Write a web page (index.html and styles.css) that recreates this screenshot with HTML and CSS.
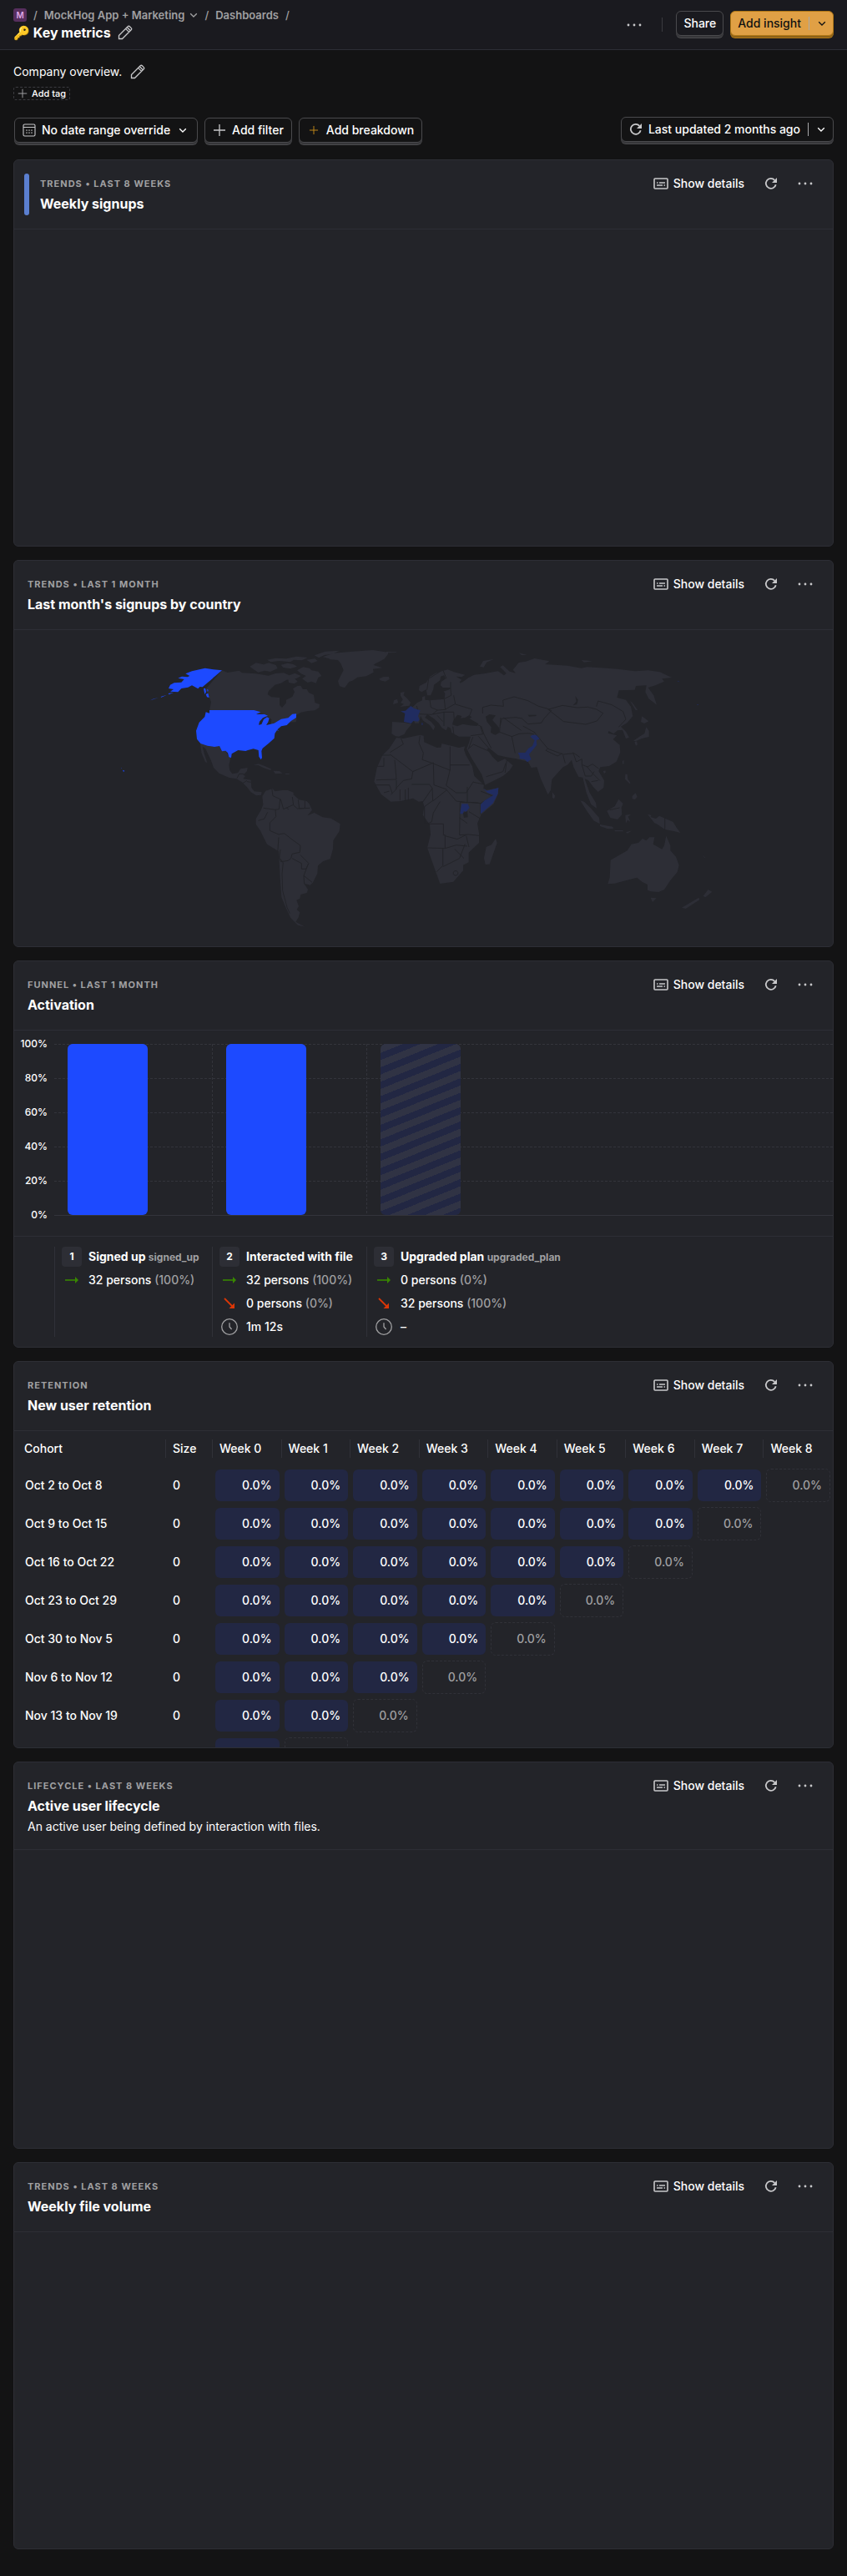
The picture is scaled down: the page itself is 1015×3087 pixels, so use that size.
FILE: index.html
```html
<!DOCTYPE html>
<html lang="en">
<head>
<meta charset="utf-8">
<meta name="viewport" content="width=device-width, initial-scale=1">
<title>Key metrics</title>
<link rel="stylesheet" href="styles.css">
</head>
<body>
<svg class="sprite" aria-hidden="true">
  <symbol id="i-pencil" viewBox="0 0 18 18"><path d="M1.5 16.5v-4L12.2 1.8a1.6 1.6 0 0 1 2.2 0l1.8 1.8a1.6 1.6 0 0 1 0 2.2L5.5 16.5zM9.6 4.4l4 4M11.4 2.8l3.9 3.9" fill="none" stroke="currentColor" stroke-width="1.3"/></symbol>
  <symbol id="i-chevron" viewBox="0 0 10 10"><path d="M1.2 3.2L5 7l3.800-3.800" fill="none" stroke="currentColor" stroke-width="1.3"/></symbol>
  <symbol id="i-plus" viewBox="0 0 16 16"><path d="M8 1v14M1 8h14" fill="none" stroke="currentColor" stroke-width="1.300"/></symbol>
  <symbol id="i-dots" viewBox="0 0 18 18"><circle cx="2" cy="9" r="1.400"/><circle cx="9" cy="9" r="1.400"/><circle cx="16" cy="9" r="1.400"/></symbol>
  <symbol id="i-refresh" viewBox="0 0 16 16"><path d="M13.700 9.200A6 6 0 1 1 12.300 3.800" fill="none" stroke="currentColor" stroke-width="1.800"/><path d="M15 1v6H9z" fill="currentColor"/></symbol>
  <symbol id="i-details" viewBox="0 0 18 14"><rect x="1" y="1" width="16" height="12" rx="1" fill="none" stroke="currentColor" stroke-width="1.600"/><path d="M4 6h1.500M7 6h7M4 9h7M12.500 9H14" stroke="currentColor" stroke-width="1.300"/></symbol>
  <symbol id="i-calendar" viewBox="0 0 16 16"><path d="M2.500 1h11A1.500 1.500 0 0 1 15 2.500v11a1.500 1.500 0 0 1-1.500 1.500h-11A1.500 1.500 0 0 1 1 13.500v-11A1.500 1.500 0 0 1 2.500 1zM1 4.500h14" fill="none" stroke="currentColor" stroke-width="1.100"/><path d="M7.300 8.200h1.400M10.300 8.200h1.400M4.300 11.200h1.400M7.300 11.200h1.400M10.300 11.200h1.400M4.300 8.200h1.400" stroke="currentColor" stroke-width="1.300"/></symbol>
  <symbol id="i-right" viewBox="0 0 20 20"><path d="M2 10h13" stroke="currentColor" stroke-width="1.600"/><path d="M14 6l4 4-4 4z" fill="currentColor"/></symbol>
  <symbol id="i-down" viewBox="0 0 20 20"><path d="M4 4l9.500 9.500" stroke="currentColor" stroke-width="1.800"/><path d="M16 9.500V16H9.500z" fill="currentColor"/></symbol>
  <symbol id="i-clock" viewBox="0 0 20 20"><circle cx="10" cy="10" r="9.300" fill="none" stroke="currentColor" stroke-width="1.300"/><path d="M10 5.200V10l2.600 3" fill="none" stroke="currentColor" stroke-width="1.300"/></symbol>
</svg>

<header class="topbar">
  <div>
    <nav class="crumbs" aria-label="Breadcrumb">
      <span class="project">M</span><span class="slash">/</span>
      <a href="#">MockHog App + Marketing <svg class="ic10"><use href="#i-chevron"/></svg></a><span class="slash">/</span>
      <a href="#">Dashboards</a><span class="slash">/</span>
    </nav>
    <div class="page-title"><h1>🔑 Key metrics</h1><button class="plain" aria-label="Edit title"><svg class="ic18"><use href="#i-pencil"/></svg></button></div>
  </div>
  <div class="actions">
    <button class="plain" aria-label="More"><svg class="ic18"><use href="#i-dots"/></svg></button>
    <span class="divider"></span>
    <button class="btn">Share</button>
    <button class="btn primary">Add insight<span class="split"></span><svg class="ic10"><use href="#i-chevron"/></svg></button>
  </div>
</header>

<main>
  <div class="description">Company overview.<button class="plain" aria-label="Edit description"><svg class="ic18"><use href="#i-pencil"/></svg></button></div>
  <button class="tag"><svg class="ic12"><use href="#i-plus"/></svg>Add tag</button>

  <div class="filters">
    <div class="filter-group">
      <button class="btn"><svg class="ic16"><use href="#i-calendar"/></svg>No date range override<svg class="ic10 trail"><use href="#i-chevron"/></svg></button>
      <button class="btn"><svg class="ic16"><use href="#i-plus"/></svg>Add filter</button>
      <button class="btn"><svg class="ic16 gold" viewBox="-3 -3 22 22"><use href="#i-plus" width="16" height="16"/></svg>Add breakdown</button>
    </div>
    <button class="btn"><svg class="ic16"><use href="#i-refresh"/></svg>Last updated 2 months ago<span class="split"></span><svg class="ic10"><use href="#i-chevron"/></svg></button>
  </div>

  <div class="cards">
    <section class="card">
      <header class="card-head"><span class="ribbon"></span>
        <div class="card-text"><p class="meta">Trends • Last 8 weeks</p><h2>Weekly signups</h2></div>
        <div class="card-tools"><button class="plain"><svg class="ic-d"><use href="#i-details"/></svg>Show details</button><button class="plain" aria-label="Refresh"><svg class="ic16"><use href="#i-refresh"/></svg></button><button class="plain" aria-label="More"><svg class="ic18"><use href="#i-dots"/></svg></button></div>
      </header>
    </section>

    <section class="card">
      <header class="card-head">
        <div class="card-text"><p class="meta">Trends • Last 1 month</p><h2>Last month's signups by country</h2></div>
        <div class="card-tools"><button class="plain"><svg class="ic-d"><use href="#i-details"/></svg>Show details</button><button class="plain" aria-label="Refresh"><svg class="ic16"><use href="#i-refresh"/></svg></button><button class="plain" aria-label="More"><svg class="ic18"><use href="#i-dots"/></svg></button></div>
      </header>
      <svg class="map" viewBox="-339 15 2943 1137" role="img" aria-label="World map of signups by country">
        <g class="land">
          <path d="M408 160l20 8 42-7 10 8 50 3 45 7 25-8 30-2 20 9 20-8 22 10-16 9-36 5-20 12-22 6-22 22-4 12 14 10 29 2 0 27 9 9 15-17 0-11 22-11 8-17-6-12 16-10 12-1 8 13 14 0 7 12 18 8 4 28 17 6-2 12-15 10-25 2-25 5-30 18 15 3-3 14-32 1-30 12-30 7 4-30-34-20-180-2-8-14 5-26-15-37-7-7z"/>
          <path d="M700 148l22 4 8 8 24 4 12 16-12 6-8 20-16-6-14 4-20-14 14-10-18-8-14-12zM508 146l22-13 28 6 18-6 26 8 6 12-26 12-20-4-24 6-16-10zM570 122l30-6 40 2 36-8 40 4-20 10-30-2-12 8-40-4-30 4zM620 140l24-6 20 4 14 8-24 8-26-4zM740 106l40-14 50-3-24 12-30 4-20 10zM712 122l30-4 10 8-22 8zM646 190l22-2 12 12-12 8-20-4z"/>
          <path d="M770 112l40-14 60-5 80-6 55 8 0 6-14 18-34 18-4 4 32 10-34 4 2 12-26 14-32 4-18 12-12 4-16 22-18-6-6-18 20-40-10-24-10-12-26-2-8-4zM973 190l14-6 18-1 6 8-16 9-18-4zM1000 93l35 1v2l-35 1z"/>
          <path d="M330 421l25 8 43 1 9 19 13-2 12 23 8 2-7 28 3 20 9 12 20-3 10-15 25-4-2 12-14 14 8 3-8 11 28 4 2 28 10 13 27 3-2 10-18 2-19-12-14-18-18-18-20-12-26-4-36-16-20-20-10-28-20-42-10-6 6 24 11 34-7-2-14-34zM520 500l20-4 22 8 24 11-4 4-24-8-20-10zM592 521l22 1 12 8-26 2zM636 531h14v3h-14z"/>
          <path d="M590 585l8 10 27-4 20 0 20 8 0 8 20 18 27 5 10 10 10 22-17 20 25-10 30 16 30 4 33 20-3 26-22 34-1 30-10 36-25 8-19 16-2 28-17 34-9 8-22-6 14 22-4 12-22 6-3 14-12 6 8 22-7 12 11 10-5 18-10 16 18 10 16 8-26-6-26-26-17-36-16-38-5-70-5-95-42-26-25-50-15-22 0-20 18-30 8-20-3-30 12-20z"/>
        </g>
        <g class="edges">
          <path d="M587 583l4 28 26 12-4 36-14 2-42-6M538 700l22-6 12-24M602 686l-2-26M619 623l10 36 36-16-4-28M682 625l4 32 20-2 0-26M665 645l14 12 45-2M640 655l8 5M602 686l-22 22 0 28 32 14 20-4 28 22 30 22-2 24-28 6-4 16-10 8-26 4-12-30 4-58M618 838l10 14-4 40 2 60 16 60 10 22M660 836l34 18 0 20 16 0 10-20-30-30M718 856l-16 42 30 24M618 804l-4 32M702 898l2 30M462 548l8-16 16 0M482 566l16-10M512 562l-14-2"/>
        </g>
        <g class="high">
          <path d="M277 172l23-9 20-5 27-6 30 5 31 3-70 60-10-1-6 7-22-12-14 7-24 4-12 13-28-2 12-8-18-3 6-13 14-7 26-2 10-11-22-4 14-6 20 2 8-4zM215 243l20-4-18 8zM190 254l20-6-22 10zM160 263l20-5-30 10zM342 226l6-2 3 14-5 8zM354 228l5 2-2 8zM350 246l8-4 4 16-8-2zM51 518l7 3-4 4zM44 510l4 2v2z"/>
          <path d="M363 303h160l24 7-16 8 30 0 12 5-18 8-12 13-3 12 10-2 8-18 12-8 8 4-4 14-7 11 29-7 12-7 13-8 25-4 15-14 14-1v14l-19 12-15 15-20 4-14 12 6 6-7-4-8 12-2 17-20 18-22 18-4 10 2 24-4 7-7-11-2-23-18-5-20 5-8 3-27-3-23 13-2 14-8-2-4-15-8-8-13 2-9-19-18 3-25-4-25-8-13-16-3-30 11-30 20-20 4-17 13 4z"/>
        </g>

        <g transform="translate(930 0)">
          <g class="land">
            <path d="M105 402l25 3 60-13 13 3 2 23 45 20 15-1 3-14 62 15 22-5-4 12 7 20 23 40 7 35 35 32-2 13 12 5 42-7-2 22-15 35-45 38-14 32 6 35v35l-37 35v35l-20 10v20l-35 40-48 7-17-47-29-82 12-48-3-35-25-35 5-30-5-20-15 2-20-12-45 10-35 2-35-27-25-45 10-50 20-45 25-25zM462 765l5 15-27 77-15 1-5-23 8-40 19-8z"/>
            <path d="M90 345l45 3 25 5-20 24-6 12-20 9-12-1-14-9zM120 240l14-3-3 12 15 14 10 12-4 12-34 4 14-10-12-4 8-12-8-14zM96 268l12-5 3 14-18 5zM45 192l14-8 20-1-4 10-18 6z"/>
            <path d="M165 290L180 276 198 268 198 256 208 252 208 266 225 268 278 263 280 242 274 236 292 230 300 226 298 222 272 222 264 214 266 202 282 190 276 178 264 182 262 196 240 212 238 228 228 250 216 250 212 228 196 238 186 232 188 216 212 204 226 182 246 170 270 162 290 157 312 166 352 176 340 184 320 182 340 194 332 202 342 218 322 214 345 200 365 186 384 176 420 172 470 163 492 178 500 170 478 148 488 142 512 164 534 170 524 158 545 132 570 128 602 117 655 127 640 138 720 143 770 152 790 148 840 151 900 155 962 163 1010 160 1052 166 1095 186 1060 190 1068 200 1036 214 1010 222 1030 250 1041 284 1012 262 1000 238 1004 214 966 216 962 230 905 232 898 258 930 266 948 290 955 325 935 348 912 362 930 380 942 402 930 405 918 374 900 376 886 388 868 378 866 386 898 394 884 408 908 428 910 455 896 488 870 504 838 508 832 522 852 556 850 582 830 597 812 578 795 555 782 550 800 600 822 636 825 656 805 642 788 600 775 545 760 543 742 508 735 482 720 500 704 508 664 552 660 590 650 607 624 550 610 508 590 510 578 488 536 478 500 472 470 465 440 440 430 442 450 470 470 490 495 478 524 502 512 520 488 540 424 572 412 535 375 475 358 442 366 420 372 398 330 398 304 384 300 368 290 362 284 376 268 366 258 350 240 334 216 318 208 330 230 345 244 362 238 376 226 358 200 340 192 324 186 350 172 350 150 300z"/>
            <path d="M945 270l8 6 20 28-8-1zM988 325l24 18-16 8-12-6zM1003 364l10 13 0 22-26 6-22 10-8-2 24-16 16-10zM961 418l8-3 3 12-6 4zM918 485l5-2-1 16-4-4zM848 523l8-3 2 6-6 5zM928 533l7 0 2 18 10 14-4 2-16-16zM953 612l12-11 6 14-8 9-10-2zM666 598l10 14-4 10-6-4zM766 628l14 4 26 26 28 32 2 22-22-12-24-34zM837 714l46 8 2 8-20 0-28-10zM862 665l28-16 14-26 16 16-6 14 2 26-16 17-26-6-6-12zM928 680l20-2-10 8 8 18-10-6-6 12zM1008 677l14 4-4 6 20 6 12-10 50 22 12 20 14 19-24-6-32-6-26-18-12-6zM890 735h30v4h-30zM930 742l22-6-16 10z"/>
            <path d="M875 842L905 825 935 808 950 785 975 780 990 765 1003 772 1015 760 1033 760 1028 785 1060 803 1068 790 1075 755 1090 790 1090 808 1110 830 1121 860 1115 885 1090 915 1068 948 1048 957 1020 955 1008 950 1008 930 988 920 970 905 920 918 890 926 865 928 872 905zM1019 977l21 2-14 14zM1226 948l14 8-24 20-8-5zM1192 977l3 8-50 32-14-4zM405 146l12-20 40-7-28 12-10 18zM545 97l30 8-20 0zM770 123l40 4-30 4zM1205 823l12 12-4-1z"/>
          </g>
          <g class="sea">
            <path d="M310 340l14-20 16 4-4 8 16-2 14-8 10 6-8 6 32 18-6 8-24-2-26-5-20 8-18-6zM426 326l14-8 22 4-12 16 24 28 2 18-16 8-16-8 2-20-16-20zM748 252l10 14-4 16-14 4 12-14zM578 320h30v4l-26 2zM344 672l16-6 2 22-14 2z"/>
          </g>
          <g class="edges">
            <path d="M122 405l8 20-48 30M82 462l82 62 74-32M99 482l6 70-72 2M60 475v30H36M164 524l-4 26-30 6-28 30M190 395l-4 26 16 36-4 24 34 12 66 26V434M298 500h70M298 518l-14 56 36 26M238 492l2 80 46 16M160 570l64 0 10 14-36 52M234 584l2 44-30 22 0 60 20 4M236 630l50-40 34 40 40 5 0-56M320 600l36 0 26-40M382 562l40 8M408 594l44 18-44 26-40-4M334 632l-2 120 32-2 38 4M408 640v38M336 634l64 2M366 668l42 26M332 690l28 20M224 712h50v40h6v48l-64-2M280 755l44 12 32-16M280 800l40-12 40 4M272 802v60l-22 22M272 866l60-30 20-52M314 802l34 34M356 755l10 40M262 632l-24 40-6 32-18 10M310 892a8 8 0 1 1 16-6 8 8 0 1 1-16 6M50 465h32M30 572h50l10 30M105 555v32l-20 20M118 588v40M137 588v40M148 582v46M60 600l20-6"/>
            <path d="M186 318l-8-30M225 265l4 28 24 10-20 16-44-2M253 303l28-2-4-38M281 300l36-20-6-30M317 282l60 18-10 25M278 262l24-12-2-24 0-24M215 230l6-40 48-30M285 190l-12-30M275 310l36 0 2 28M252 322l20 22M236 318l40-8 0 50M365 440l15-40M372 395l44-6-10-30-22-6M410 360l10 30 26 50M400 397l40 46M362 444l20-18 58 26M415 315l0-22 30-8 45 4-2-22 40-12 50 14 38 20 30 8 16 8-26 28-10 16-48 4-22-20-22-4-50 4-6 26M480 330l-4 52 44 16 26-10 34-2 20 4M520 398l12 60M490 330l36 26 28 20M560 360l44 24M652 300l50-14 52 8 40-2 30 8 24 14-22 28-40 12-80-10-56-44M824 290l6-20 50 14 40 24 10 28-26 28M600 382l50 60 54 20 40-4 20 14M650 440l-8 8 42 20 18-10M704 464l8 30M740 455l12 34 20-10 0 20 20 8 18-10 22 16M772 500l12 40 22 0 10-16M790 506l20 24 26 26M806 560l24-4M428 542l60-18 10-30M502 482l-6 46M1070 690v45M872 662l36-8M308 362l4 30"/>
          </g>
          <g class="low">
            <path d="M157 288l10 8 24 8-8 20 5 14-6 6-16-2-8 9-26-6 4-30-16-8 18-2 6-6zM196 348l4 2-1 8-3-2zM586 398l8-6 14 0 12 14-12 6 2 16-16 20-12 14 8 18-14 10-10-10-18-2 0-10-6-12 26 0 12-16 14-8 8-20zM418 585l12 8 42-11-2 22-18 34-44 38 0-34 14-14 32-20-22-8zM340 640l22 0 6 14-12 14-8-2-4 10-10 0 2-16zM1115 197l10 5-8-2zM1186 283h5v2h-5z"/>
          </g>
        </g>
      </svg>
    </section>

    <section class="card">
      <header class="card-head">
        <div class="card-text"><p class="meta">Funnel • Last 1 month</p><h2>Activation</h2></div>
        <div class="card-tools"><button class="plain"><svg class="ic-d"><use href="#i-details"/></svg>Show details</button><button class="plain" aria-label="Refresh"><svg class="ic16"><use href="#i-refresh"/></svg></button><button class="plain" aria-label="More"><svg class="ic18"><use href="#i-dots"/></svg></button></div>
      </header>
      <div class="funnel">
        <div class="axis"><span>100%</span><span>80%</span><span>60%</span><span>40%</span><span>20%</span><span>0%</span></div>
        <div class="plot">
          <svg class="grid" aria-hidden="true"><path class="h" d="M0 .5h3000M0 41.500h3000M0 82.500h3000M0 123.500h3000M0 164.500h3000"/><path class="h" d="M189.500 0v205M374.500 0v205"/><path class="base" d="M0 205.500h3000"/></svg>
          <div class="bar"></div><div class="bar"></div><div class="bar dropped"></div>
        </div>
      </div>
      <div class="steps">
        <div></div>
        <div class="step">
          <h3><span class="num">1</span><span>Signed up <small>signed_up</small></span></h3>
          <p><svg class="ic20 up"><use href="#i-right"/></svg><span>32 persons <i>(100%)</i></span></p>
        </div>
        <div class="step">
          <h3><span class="num">2</span>Interacted with file</h3>
          <p><svg class="ic20 up"><use href="#i-right"/></svg><span>32 persons <i>(100%)</i></span></p>
          <p><svg class="ic20 down"><use href="#i-down"/></svg><span>0 persons <i>(0%)</i></span></p>
          <p><svg class="ic20 time"><use href="#i-clock"/></svg>1m 12s</p>
        </div>
        <div class="step">
          <h3><span class="num">3</span><span>Upgraded plan <small>upgraded_plan</small></span></h3>
          <p><svg class="ic20 up"><use href="#i-right"/></svg><span>0 persons <i>(0%)</i></span></p>
          <p><svg class="ic20 down"><use href="#i-down"/></svg><span>32 persons <i>(100%)</i></span></p>
          <p><svg class="ic20 time"><use href="#i-clock"/></svg>–</p>
        </div>
      </div>
    </section>

    <section class="card">
      <header class="card-head">
        <div class="card-text"><p class="meta">Retention</p><h2>New user retention</h2></div>
        <div class="card-tools"><button class="plain"><svg class="ic-d"><use href="#i-details"/></svg>Show details</button><button class="plain" aria-label="Refresh"><svg class="ic16"><use href="#i-refresh"/></svg></button><button class="plain" aria-label="More"><svg class="ic18"><use href="#i-dots"/></svg></button></div>
      </header>
      <table class="retention">
        <colgroup><col class="c-cohort"><col class="c-size"><col span="9"></colgroup>
        <thead><tr><th>Cohort</th><th>Size</th><th>Week 0</th><th>Week 1</th><th>Week 2</th><th>Week 3</th><th>Week 4</th><th>Week 5</th><th>Week 6</th><th>Week 7</th><th>Week 8</th></tr></thead>
        <tbody>
          <tr><td>Oct 2 to Oct 8</td><td>0</td><td><b>0.0%</b></td><td><b>0.0%</b></td><td><b>0.0%</b></td><td><b>0.0%</b></td><td><b>0.0%</b></td><td><b>0.0%</b></td><td><b>0.0%</b></td><td><b>0.0%</b></td><td><b class="open">0.0%</b></td></tr>
          <tr><td>Oct 9 to Oct 15</td><td>0</td><td><b>0.0%</b></td><td><b>0.0%</b></td><td><b>0.0%</b></td><td><b>0.0%</b></td><td><b>0.0%</b></td><td><b>0.0%</b></td><td><b>0.0%</b></td><td><b class="open">0.0%</b></td><td></td></tr>
          <tr><td>Oct 16 to Oct 22</td><td>0</td><td><b>0.0%</b></td><td><b>0.0%</b></td><td><b>0.0%</b></td><td><b>0.0%</b></td><td><b>0.0%</b></td><td><b>0.0%</b></td><td><b class="open">0.0%</b></td><td></td><td></td></tr>
          <tr><td>Oct 23 to Oct 29</td><td>0</td><td><b>0.0%</b></td><td><b>0.0%</b></td><td><b>0.0%</b></td><td><b>0.0%</b></td><td><b>0.0%</b></td><td><b class="open">0.0%</b></td><td></td><td></td><td></td></tr>
          <tr><td>Oct 30 to Nov 5</td><td>0</td><td><b>0.0%</b></td><td><b>0.0%</b></td><td><b>0.0%</b></td><td><b>0.0%</b></td><td><b class="open">0.0%</b></td><td></td><td></td><td></td><td></td></tr>
          <tr><td>Nov 6 to Nov 12</td><td>0</td><td><b>0.0%</b></td><td><b>0.0%</b></td><td><b>0.0%</b></td><td><b class="open">0.0%</b></td><td></td><td></td><td></td><td></td><td></td></tr>
          <tr><td>Nov 13 to Nov 19</td><td>0</td><td><b>0.0%</b></td><td><b>0.0%</b></td><td><b class="open">0.0%</b></td><td></td><td></td><td></td><td></td><td></td><td></td></tr>
          <tr><td></td><td></td><td><b></b></td><td><b class="open"></b></td><td></td><td></td><td></td><td></td><td></td><td></td><td></td></tr>
        </tbody>
      </table>
    </section>

    <section class="card">
      <header class="card-head">
        <div class="card-text"><p class="meta">Lifecycle • Last 8 weeks</p><h2>Active user lifecycle</h2><p class="note">An active user being defined by interaction with files.</p></div>
        <div class="card-tools"><button class="plain"><svg class="ic-d"><use href="#i-details"/></svg>Show details</button><button class="plain" aria-label="Refresh"><svg class="ic16"><use href="#i-refresh"/></svg></button><button class="plain" aria-label="More"><svg class="ic18"><use href="#i-dots"/></svg></button></div>
      </header>
    </section>

    <section class="card">
      <header class="card-head">
        <div class="card-text"><p class="meta">Trends • Last 8 weeks</p><h2>Weekly file volume</h2></div>
        <div class="card-tools"><button class="plain"><svg class="ic-d"><use href="#i-details"/></svg>Show details</button><button class="plain" aria-label="Refresh"><svg class="ic16"><use href="#i-refresh"/></svg></button><button class="plain" aria-label="More"><svg class="ic18"><use href="#i-dots"/></svg></button></div>
      </header>
    </section>
  </div>
</main>
</body>
</html>
```
FILE: styles.css
```css
:root {
  --bg: #131314;
  --surface: #232429;
  --line: #2d2e35;
  --control: #4a4a4d;
  --muted: #a0a0a2;
  --icon: #c8c8ca;
  --blue: #1d4aff;
  --blue-dim: #222743;
}
* { box-sizing: border-box; }
body { margin: 0; background: var(--bg); color: #fff; font: 14px/20px Inter, "Liberation Sans", sans-serif; }
h1, h2, h3, p { margin: 0; }
button { font: inherit; color: inherit; cursor: pointer; }
svg { display: block; flex: none; fill: currentColor; }
.sprite { position: absolute; width: 0; height: 0; }
.ic10 { width: 10px; height: 10px; }
.ic12 { width: 12px; height: 12px; }
.ic16 { width: 16px; height: 16px; color: var(--icon); }
.ic18 { width: 18px; height: 18px; color: var(--icon); }
.ic20 { width: 20px; height: 20px; }
.ic-d { width: 18px; height: 14px; color: var(--icon); }
.plain { display: flex; align-items: center; gap: 6px; padding: 0; border: 0; background: none; font-weight: 500; }

.topbar { display: flex; justify-content: space-between; height: 60px; padding: 8px 16px 0; background: #1a1a1f; border-bottom: 1px solid var(--line); }
.crumbs { display: flex; align-items: center; height: 20px; color: var(--muted); font-size: 13px; font-weight: 600; }
.crumbs a { display: flex; align-items: center; gap: 6px; color: inherit; text-decoration: none; }
.slash { margin: 0 8px; font-weight: 500; }
.project { width: 16px; height: 16px; border-radius: 3px; background: #572f5e; color: #dfa8e6; font-size: 10px; line-height: 16px; text-align: center; }
.page-title { display: flex; align-items: center; gap: 8px; height: 22px; }
h1 { font-size: 16px; line-height: 22px; font-weight: 700; }
.actions { display: flex; align-items: flex-start; gap: 8px; padding-top: 5px; }
.actions .plain { height: 33px; }
.divider { width: 1px; height: 17px; margin: 8px 8px 0 16px; background: #3b3b40; }

.btn { display: flex; align-items: center; gap: 7px; height: 30px; padding: 0 9px; border: 1px solid var(--control); border-radius: 6px; background: var(--bg); box-shadow: 0 2px 0 #353538, 0 3px 0 var(--control); font-weight: 500; white-space: nowrap; }
.topbar .btn { padding: 0 8px; background: #1a1a1f; }
.topbar .primary { border-color: #b17816; background: #e0a045; color: #111; box-shadow: 0 2px 0 #8c6118, 0 3px 0 #b17816; }
.split { width: 1px; height: 16px; margin: 0 3px 0 2px; background: #a9a9ab; }
.trail { margin: 0 3px; }
.btn .gold { color: #c48a1a; }

main { padding: 12px 16px 32px; }
.description { display: flex; align-items: center; gap: 10px; height: 28px; }
.tag { display: flex; align-items: center; gap: 5px; height: 16px; margin: 4px 0 20px; padding: 0 4px; border: 1px dashed #3b3b40; border-radius: 3px; background: none; font-size: 11px; font-weight: 500; line-height: 14px; }
.tag svg { color: var(--muted); }
.filters { display: flex; justify-content: space-between; align-items: flex-start; height: 35px; margin-bottom: 16px; }
.filter-group { display: flex; gap: 8px; padding: 1px; }

.cards { display: grid; grid-auto-rows: 464px; gap: 16px; }
.card { overflow: hidden; border: 1px solid var(--line); border-radius: 6px; background: var(--surface); }
.card-head { display: flex; padding: 16px; border-bottom: 1px solid var(--line); }
.card-text { flex: 1; }
.ribbon { width: 6px; height: 50px; margin: 0 13px 0 -4px; border-radius: 3px; background: #5b7fd0; }
.meta { color: var(--muted); font-size: 11px; font-weight: 700; line-height: 24px; letter-spacing: 1px; text-transform: uppercase; }
h2 { margin-bottom: 2px; font-size: 16px; line-height: 24px; font-weight: 700; }
.note { line-height: 22px; }
.card-tools { display: flex; align-items: center; gap: 24px; height: 24px; padding-right: 8px; }

.map { width: 100%; height: auto; }
.land { fill: #2d2e36; }
.sea { fill: var(--surface); }
.high { fill: var(--blue); }
.low { fill: #202c60; }
.edges { fill: none; stroke: var(--surface); stroke-width: 3; stroke-linejoin: round; }

.funnel { display: grid; grid-template-columns: 48px 1fr; padding-top: 16px; height: 246px; }
.axis { display: flex; flex-direction: column; gap: 21px; margin-top: -10px; padding-right: 8px; text-align: right; font-size: 12px; font-weight: 500; }
.plot { position: relative; display: grid; grid-template-columns: 189px 185px 1fr; align-items: start; }
.grid { position: absolute; inset: 0; width: 100%; height: 207px; }
.grid path { fill: none; stroke: #33343b; }
.grid .h { stroke-dasharray: 3 2; }
.bar { position: relative; width: 96px; height: 205px; margin-left: 16px; border-radius: 6px; background: var(--blue); }
.bar + .bar { margin-left: 17px; }
.bar.dropped { background: repeating-linear-gradient(-22deg, #222743 0 8px, #303344 8px 16px); }
.steps { display: grid; grid-template-columns: 48px 189px 185px 1fr; padding: 12px 0; border-top: 1px solid var(--line); }
.step { height: 108px; padding-left: 8px; border-left: 1px solid #303138; white-space: nowrap; }
.step h3, .step p { display: flex; align-items: center; gap: 10px; height: 28px; font-size: 14px; }
.step h3 { gap: 8px; height: 24px; margin-bottom: 2px; font-weight: 700; }
.step p { padding: 0 2px; font-weight: 500; }
.step i { color: var(--muted); font-style: normal; }
.num { width: 24px; height: 24px; border-radius: 4px; background: #2d2e35; font-size: 12px; line-height: 24px; text-align: center; }
.step small { color: var(--muted); font-size: 12px; }
.up { color: #388600; }
.down { color: #db3707; }
.time { color: var(--muted); }

.retention { width: 100%; table-layout: fixed; border-collapse: collapse; font-weight: 500; }
.c-cohort { width: 182px; }
.c-size { width: 56px; }
.retention th { height: 42px; padding: 0 0 0 8px; font-weight: 500; text-align: left; line-height: 22px; background: linear-gradient(#303138, #303138) right 10px / 1px 22px no-repeat; }
.retention th:first-child { padding-left: 12px; }
.retention th:last-child { background: none; }
.retention td { height: 46px; padding: 0 3px; }
.retention td:first-child { padding-left: 13px; }
.retention td:nth-child(2) { padding-left: 8px; }
.retention b { display: block; height: 38px; padding-right: 9px; border-radius: 6px; background: var(--blue-dim); font-weight: 500; line-height: 38px; text-align: right; }
.retention .open { height: 40px; border: 1px dashed #303138; background: none; color: var(--muted); }
```
